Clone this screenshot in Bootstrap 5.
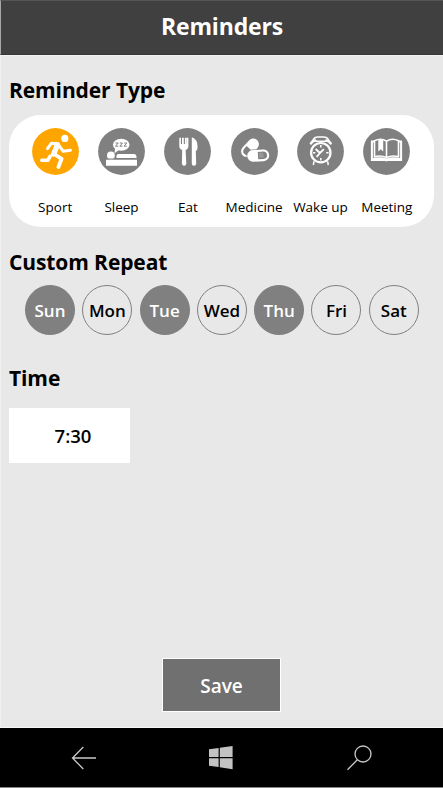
<!DOCTYPE html>
<html lang="en">
<head>
<meta charset="utf-8">
<meta name="viewport" content="width=device-width, initial-scale=1">
<title>Reminders</title>
<link href="https://cdn.jsdelivr.net/npm/bootstrap@5.3.0/dist/css/bootstrap.min.css" rel="stylesheet">
<style>
body{font-family:"Open Sans","Noto Sans",sans-serif;background:#e8e8e8;color:#000;height:788px}
.app-bar{height:55px;background:#404040;border-top:1px solid #555;border-bottom:1px solid #363636;border-left:1px solid #a8a8a8}
.app-bar h1{font-size:23px;line-height:30px;font-weight:700;margin:0 0 3px;letter-spacing:-.15px}
.app-main{padding:0 9px 0 8px;height:673px;border-left:1px solid #f0f0f0;border-top:1px solid #f2f2f2;border-bottom:1px solid #f8f8f8}
.app-main h2{font-size:21px;line-height:28px;font-weight:700;margin:0;letter-spacing:-.1px}
.h-type{padding-top:20px}
.h-repeat{padding-top:21px}
.h-time{padding-top:29px}
.types{height:112px;border-radius:32px;padding:13px 14px 0 13px;margin-top:11px}
.types svg{width:47px;height:47px}
.types span{font-size:13.5px;line-height:18px;margin-top:23px;white-space:nowrap}
.days{gap:7.3px;padding-left:16px;margin-top:9px}
.day{width:50px;height:50px;border:1.3px solid #808080;font-size:17px;font-weight:600;padding-top:2px}
.day.active{background:#808080;color:#fff}
.time-box{width:121px;height:55px;font-size:18.5px;font-weight:600;padding-left:7px;margin-top:16px}
.save{width:119px;height:54px;background:#707070;border:1.5px solid #fff;border-radius:0;color:#fff;font-size:19px;font-weight:600;margin-bottom:15px;padding-top:2px}
.phone-nav{height:60px;background:#000;border-bottom:1px solid #888;padding:0 68px 0 69px}
</style>
</head>
<body class="m-0">
<header class="app-bar d-flex align-items-center justify-content-center text-white"><h1>Reminders</h1></header>
<main class="app-main d-flex flex-column">
  <h2 class="h-type">Reminder Type</h2>
  <div class="types bg-white d-flex">
    <div class="col-2 d-flex flex-column align-items-center">
      <svg viewBox="0 0 47 47"><circle cx="23.5" cy="23.5" r="23.4" fill="#ffa500"/><circle cx="32.8" cy="10.4" r="3.6" fill="#fff"/><g fill="none" stroke="#fff" stroke-linecap="round" stroke-linejoin="round"><path stroke-width="3" d="M15.5 20.6L19.3 15.3L25.5 15.5L31.3 23.3L38.4 22.2"/><path stroke-width="5.4" d="M25.3 17L21.7 26"/><path stroke-width="3.8" d="M22.2 26L29.6 30.8L26.4 39"/><path stroke-width="3.6" d="M18.2 28.2L15.8 32.2L9.8 32.3"/></g></svg>
      <span>Sport</span>
    </div>
    <div class="col-2 d-flex flex-column align-items-center">
      <svg viewBox="0 0 47 47"><circle cx="23.5" cy="23.5" r="23.4" fill="#808080"/><g fill="#fff"><ellipse cx="23.2" cy="16.7" rx="8.3" ry="6"/><path d="M17 20L16.6 25.2L22 21Z"/><circle cx="12.9" cy="27.5" r="3.9"/><path d="M18.5 30V28q0-2 2-2H36q2.6 0 2.6 4ZM8 31.6H39V37.7H8Z"/></g><path d="M8 31H39" stroke="#808080" stroke-width="1"/><g fill="none" stroke="#777" stroke-width=".9"><path d="M17.5 15h2.7l-2.7 3.2h2.7M21.8 15h2.7l-2.7 3.2h2.7M26.1 15h2.7l-2.7 3.2h2.7"/></g></svg>
      <span>Sleep</span>
    </div>
    <div class="col-2 d-flex flex-column align-items-center">
      <svg viewBox="0 0 47 47"><circle cx="23.5" cy="23.5" r="23.4" fill="#808080"/><path fill="#fff" d="M15.3 10q.8-1 1.6 0V16h1.1V9.9q.9-1 1.8 0V16h1.1V9.9q.9-1 1.8 0V16h.2V10q.8-1 1.5 0V18q0 3-2.8 4L22.3 35.5q-.2 2.2-2.2 2.2t-2.2-2.2L18.2 22q-2.9-1-2.9-4ZM27.8 9.2q5.8 1.8 5.8 9.8 0 3.2-1.8 4L32.2 35.5q0 2.2-2.2 2.2t-2.2-2.2Z"/></svg>
      <span>Eat</span>
    </div>
    <div class="col-2 d-flex flex-column align-items-center">
      <svg viewBox="0 0 47 47"><circle cx="23.5" cy="23.5" r="23.4" fill="#808080"/><g transform="rotate(-48 18.6 20)"><rect x="8.5" y="14.5" width="21" height="11.4" rx="5.7" fill="#fff"/><path fill="#808080" d="M18 16.5H14.2q-3.5.5-3.5 3.7t3.5 3.7H18Z"/></g><g transform="rotate(-3 27 27.5)"><rect x="15.5" y="21.2" width="23" height="12.6" rx="6.3" fill="#808080"/><rect x="16.2" y="21.8" width="22" height="11.7" rx="5.8" fill="#fff"/><path fill="#808080" d="M27 23.9h5.4q3.6.6 3.6 3.7t-3.6 3.7H27Z"/><path fill="#fff" opacity=".18" d="M28 24.8h4l1 5h-5Z"/></g></svg>
      <span>Medicine</span>
    </div>
    <div class="col-2 d-flex flex-column align-items-center">
      <svg viewBox="0 0 47 47"><circle cx="23.5" cy="23.5" r="23.4" fill="#808080"/><g fill="none" stroke="#fff"><circle cx="23.8" cy="24.7" r="9.7" stroke-width="2.2"/><path stroke-width="2.6" stroke-linecap="round" d="M14 15.3Q15 13.4 18.2 12.6M29.4 12.6Q32.6 13.4 33.6 15.3"/><path stroke-width="1.5" d="M15.5 13Q17 9 21 9H26.6Q30.6 9 32.1 13M18.5 13.2H29.1M17 33.3L16.3 37M30.6 33.3L31.3 37M23.8 17v2.4M23.8 30v2.4M16 24.7h2.3M29.2 24.7h2.4"/><path stroke-width="1.8" d="M18.6 21L23 25L26.8 21.2M19.6 28.8L23 25"/></g></svg>
      <span>Wake up</span>
    </div>
    <div class="col-2 d-flex flex-column align-items-center">
      <svg viewBox="0 0 47 47"><circle cx="23.5" cy="23.5" r="23.4" fill="#808080"/><g fill="none" stroke="#fff" stroke-width="1.6"><path d="M11.5 12.8Q18 9.5 23.5 13.2Q29 9.5 35.5 12.8V28.8Q29 27 23.5 29.5Q18 27 11.5 28.8Z"/><path d="M23.5 13.2V29.5"/><path stroke-width="2" d="M11 13.6H8.9V32H38.1V13.6H36"/></g><path fill="#fff" d="M9 30.2Q18 28 23.5 30.4Q29 28 38 30.2V32.5H26L23.5 33.4L21 32.5H9ZM15.3 11.5h4.9V23.6L17.8 21.3L15.3 23.6Z"/></svg>
      <span>Meeting</span>
    </div>
  </div>
  <h2 class="h-repeat">Custom Repeat</h2>
  <div class="days d-flex">
    <div class="day active rounded-circle flex-shrink-0 d-flex align-items-center justify-content-center">Sun</div>
    <div class="day rounded-circle flex-shrink-0 d-flex align-items-center justify-content-center">Mon</div>
    <div class="day active rounded-circle flex-shrink-0 d-flex align-items-center justify-content-center">Tue</div>
    <div class="day rounded-circle flex-shrink-0 d-flex align-items-center justify-content-center">Wed</div>
    <div class="day active rounded-circle flex-shrink-0 d-flex align-items-center justify-content-center">Thu</div>
    <div class="day rounded-circle flex-shrink-0 d-flex align-items-center justify-content-center">Fri</div>
    <div class="day rounded-circle flex-shrink-0 d-flex align-items-center justify-content-center">Sat</div>
  </div>
  <h2 class="h-time">Time</h2>
  <div class="time-box bg-white d-flex align-items-center justify-content-center">7:30</div>
  <button class="save btn px-0 pb-0 mt-auto align-self-center" type="button">Save</button>
</main>
<nav class="phone-nav d-flex align-items-center justify-content-between">
  <svg width="30" height="30" viewBox="0 0 30 30" fill="none" stroke="#c8c8c8" stroke-width="1.3"><path d="M3.5 15H27M14.3 4L3.5 15L14.3 26"/></svg>
  <svg width="30" height="30" viewBox="0 0 30 30" fill="#c3c3c3"><path d="M2 6.3L11.6 4.9V14H2ZM12.8 4.7L25.6 3V14H12.8ZM2 15.2H11.6V24.1L2 22.7ZM12.8 15.2H25.6V26.2L12.8 24.3Z"/></svg>
  <svg width="30" height="30" viewBox="0 0 30 30" fill="none" stroke="#c8c8c8" stroke-width="1.3"><circle cx="18" cy="11" r="8"/><path d="M12.4 16.7L2.5 26.7"/></svg>
</nav>
<script src="https://cdn.jsdelivr.net/npm/bootstrap@5.3.0/dist/js/bootstrap.bundle.min.js"></script>
</body>
</html>
